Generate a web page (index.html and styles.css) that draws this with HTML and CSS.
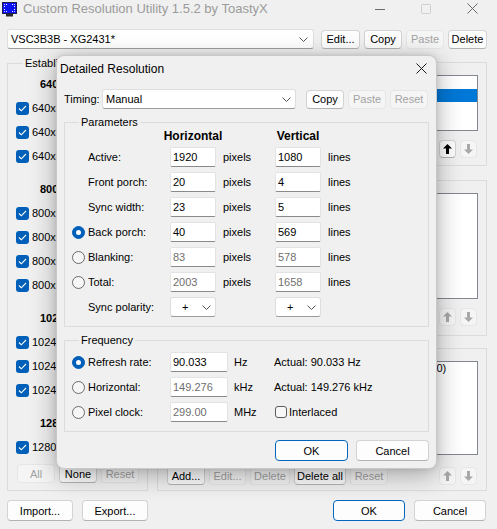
FILE: index.html
```html
<!DOCTYPE html>
<html>
<head>
<meta charset="utf-8">
<title>Custom Resolution Utility</title>
<link rel="stylesheet" href="styles.css">
</head>
<body>
<div class="app">
  <header class="titlebar">
    <svg class="appicon" width="15" height="15" viewBox="0 0 15 15">
      <rect x="0.5" y="0.5" width="14" height="11" fill="#0b12f2" stroke="#1b1b55"/>
      <path d="M2.5 5V2.5H5M10 2.5H12.5V5M12.5 7V9.5H10M5 9.5H2.5V7" stroke="#fff" fill="none" stroke-dasharray="1 1"/>
      <rect x="4" y="12" width="7" height="2.5" fill="#2a2a2a"/>
    </svg>
    <span class="apptitle">Custom Resolution Utility 1.5.2 by ToastyX</span>
    <div class="caption">
      <div class="capbtn"><svg width="10" height="10" viewBox="0 0 10 10"><path d="M0 5.5H10" stroke="#6b6b6b"/></svg></div>
      <div class="capbtn"><svg width="10" height="10" viewBox="0 0 10 10"><rect x="0.5" y="0.5" width="9" height="9" rx="1" fill="none" stroke="#cfcfcf"/></svg></div>
      <div class="capbtn"><svg width="11" height="11" viewBox="0 0 11 11"><path d="M0.5 0.5L10.5 10.5M10.5 0.5L0.5 10.5" stroke="#6b6b6b"/></svg></div>
    </div>
  </header>

  <div class="toprow">
    <div class="combo main-combo"><span>VSC3B3B - XG2431*</span><svg class="chev" width="9" height="5" viewBox="0 0 9 5"><path d="M0.5 0.5L4.5 4.5L8.5 0.5" fill="none" stroke="#555"/></svg></div>
    <button class="btn w39">Edit...</button>
    <button class="btn w38">Copy</button>
    <button class="btn w38 dis">Paste</button>
    <button class="btn w39">Delete</button>
  </div>

  <div class="mainbody">
    <fieldset class="group est">
      <legend>Established resolutions</legend>
      <div class="sec">
        <div class="sec-h">640x480</div>
        <div class="item"><span class="cb on"><svg width="9" height="7" viewBox="0 0 9 7"><path d="M1 3.5L3.3 5.8L8 1" fill="none" stroke="#fff" stroke-width="1.1"/></svg></span>640x480 @ 60 Hz</div>
        <div class="item"><span class="cb on"><svg width="9" height="7" viewBox="0 0 9 7"><path d="M1 3.5L3.3 5.8L8 1" fill="none" stroke="#fff" stroke-width="1.1"/></svg></span>640x480 @ 72 Hz</div>
        <div class="item"><span class="cb on"><svg width="9" height="7" viewBox="0 0 9 7"><path d="M1 3.5L3.3 5.8L8 1" fill="none" stroke="#fff" stroke-width="1.1"/></svg></span>640x480 @ 75 Hz</div>
      </div>
      <div class="sec">
        <div class="sec-h">800x600</div>
        <div class="item"><span class="cb on"><svg width="9" height="7" viewBox="0 0 9 7"><path d="M1 3.5L3.3 5.8L8 1" fill="none" stroke="#fff" stroke-width="1.1"/></svg></span>800x600 @ 56 Hz</div>
        <div class="item"><span class="cb on"><svg width="9" height="7" viewBox="0 0 9 7"><path d="M1 3.5L3.3 5.8L8 1" fill="none" stroke="#fff" stroke-width="1.1"/></svg></span>800x600 @ 60 Hz</div>
        <div class="item"><span class="cb on"><svg width="9" height="7" viewBox="0 0 9 7"><path d="M1 3.5L3.3 5.8L8 1" fill="none" stroke="#fff" stroke-width="1.1"/></svg></span>800x600 @ 72 Hz</div>
        <div class="item"><span class="cb on"><svg width="9" height="7" viewBox="0 0 9 7"><path d="M1 3.5L3.3 5.8L8 1" fill="none" stroke="#fff" stroke-width="1.1"/></svg></span>800x600 @ 75 Hz</div>
      </div>
      <div class="sec">
        <div class="sec-h">1024x768</div>
        <div class="item"><span class="cb on"><svg width="9" height="7" viewBox="0 0 9 7"><path d="M1 3.5L3.3 5.8L8 1" fill="none" stroke="#fff" stroke-width="1.1"/></svg></span>1024x768 @ 60 Hz</div>
        <div class="item"><span class="cb on"><svg width="9" height="7" viewBox="0 0 9 7"><path d="M1 3.5L3.3 5.8L8 1" fill="none" stroke="#fff" stroke-width="1.1"/></svg></span>1024x768 @ 70 Hz</div>
        <div class="item"><span class="cb on"><svg width="9" height="7" viewBox="0 0 9 7"><path d="M1 3.5L3.3 5.8L8 1" fill="none" stroke="#fff" stroke-width="1.1"/></svg></span>1024x768 @ 75 Hz</div>
      </div>
      <div class="sec last">
        <div class="sec-h">1280x1024</div>
        <div class="item"><span class="cb on"><svg width="9" height="7" viewBox="0 0 9 7"><path d="M1 3.5L3.3 5.8L8 1" fill="none" stroke="#fff" stroke-width="1.1"/></svg></span>1280x1024 @ 75 Hz</div>
      </div>
      <div class="btnrow est-btns">
        <button class="btn w38 dis">All</button>
        <button class="btn w38">None</button>
        <button class="btn w38 dis">Reset</button>
      </div>
    </fieldset>

    <div class="rightcol">
      <div class="rgroup g1">
        <div class="list l1">
          <div class="li"></div>
          <div class="li sel"></div>
        </div>
        <div class="btnrow">
          <div class="arrows">
            <button class="btn arr"><svg width="9" height="10" viewBox="0 0 9 10"><path d="M4.5 0L9 4.5H6V10H3V4.5H0Z" fill="#000"/></svg></button>
            <button class="btn arr dis"><svg width="9" height="10" viewBox="0 0 9 10"><path d="M4.5 10L9 5.5H6V0H3V5.5H0Z" fill="#a8a8a8"/></svg></button>
          </div>
        </div>
      </div>

      <div class="rgroup g2">
        <div class="list l2"></div>
        <div class="btnrow">
          <div class="arrows">
            <button class="btn arr dis"><svg width="9" height="10" viewBox="0 0 9 10"><path d="M4.5 0L9 4.5H6V10H3V4.5H0Z" fill="#a8a8a8"/></svg></button>
            <button class="btn arr dis"><svg width="9" height="10" viewBox="0 0 9 10"><path d="M4.5 10L9 5.5H6V0H3V5.5H0Z" fill="#a8a8a8"/></svg></button>
          </div>
        </div>
      </div>

      <div class="rgroup g3">
        <div class="list l3">
          <div class="li">CTA-861: 4 data blocks, 2 detailed resolutions (space: 0)</div>
        </div>
        <div class="btnrow">
          <button class="btn w38">Add...</button>
          <button class="btn w37 dis">Edit...</button>
          <button class="btn w40 dis">Delete</button>
          <button class="btn w52">Delete all</button>
          <button class="btn w38 dis">Reset</button>
          <div class="arrows">
            <button class="btn arr dis"><svg width="9" height="10" viewBox="0 0 9 10"><path d="M4.5 0L9 4.5H6V10H3V4.5H0Z" fill="#a8a8a8"/></svg></button>
            <button class="btn arr dis"><svg width="9" height="10" viewBox="0 0 9 10"><path d="M4.5 10L9 5.5H6V0H3V5.5H0Z" fill="#a8a8a8"/></svg></button>
          </div>
        </div>
      </div>
    </div>
  </div>

  <div class="bottomrow">
    <button class="btn big w66">Import...</button>
    <button class="btn big w66">Export...</button>
    <button class="btn big w72 def push">OK</button>
    <button class="btn big w72">Cancel</button>
  </div>

  <div class="dialog">
    <div class="dlg-title">
      <span>Detailed Resolution</span>
      <svg class="dlg-close" width="11" height="11" viewBox="0 0 11 11"><path d="M0.5 0.5L10.5 10.5M10.5 0.5L0.5 10.5" stroke="#1a1a1a"/></svg>
    </div>
    <div class="timing">
      <span class="timing-lbl">Timing:</span>
      <div class="combo timing-combo"><span>Manual</span><svg class="chev" width="9" height="5" viewBox="0 0 9 5"><path d="M0.5 0.5L4.5 4.5L8.5 0.5" fill="none" stroke="#555"/></svg></div>
      <button class="btn w38">Copy</button>
      <button class="btn w38 dis">Paste</button>
      <button class="btn w38 dis">Reset</button>
    </div>

    <fieldset class="group params">
      <legend>Parameters</legend>
      <div class="pgrid">
        <div></div><div></div><div class="hdr"><span>Horizontal</span></div><div></div><div class="hdr"><span>Vertical</span></div><div></div>

        <div></div><div class="lbl">Active:</div><div class="tb">1920</div><div class="unit">pixels</div><div class="tb">1080</div><div class="unit">lines</div>
        <div></div><div class="lbl">Front porch:</div><div class="tb">20</div><div class="unit">pixels</div><div class="tb">4</div><div class="unit">lines</div>
        <div></div><div class="lbl">Sync width:</div><div class="tb">23</div><div class="unit">pixels</div><div class="tb">5</div><div class="unit">lines</div>
        <span class="rb on"></span><div class="lbl">Back porch:</div><div class="tb">40</div><div class="unit">pixels</div><div class="tb">569</div><div class="unit">lines</div>
        <span class="rb"></span><div class="lbl">Blanking:</div><div class="tb dis">83</div><div class="unit">pixels</div><div class="tb dis">578</div><div class="unit">lines</div>
        <span class="rb"></span><div class="lbl">Total:</div><div class="tb dis">2003</div><div class="unit">pixels</div><div class="tb dis">1658</div><div class="unit">lines</div>
        <div></div><div class="lbl">Sync polarity:</div>
        <div class="combo pol"><span>+</span><svg class="chev" width="9" height="5" viewBox="0 0 9 5"><path d="M0.5 0.5L4.5 4.5L8.5 0.5" fill="none" stroke="#555"/></svg></div>
        <div></div>
        <div class="combo pol"><span>+</span><svg class="chev" width="9" height="5" viewBox="0 0 9 5"><path d="M0.5 0.5L4.5 4.5L8.5 0.5" fill="none" stroke="#555"/></svg></div>
        <div></div>
      </div>
    </fieldset>

    <fieldset class="group freq">
      <legend>Frequency</legend>
      <div class="fgrid">
        <span class="rb on"></span><div class="lbl">Refresh rate:</div><div class="tb">90.033</div><div class="unit">Hz</div><div class="actual">Actual: 90.033 Hz</div>
        <span class="rb"></span><div class="lbl">Horizontal:</div><div class="tb dis">149.276</div><div class="unit">kHz</div><div class="actual">Actual: 149.276 kHz</div>
        <span class="rb"></span><div class="lbl">Pixel clock:</div><div class="tb dis">299.00</div><div class="unit">MHz</div><div class="actual inter"><span class="cb off"></span>Interlaced</div>
      </div>
    </fieldset>

    <div class="dlg-btns">
      <button class="btn big w73 def">OK</button>
      <button class="btn big w73">Cancel</button>
    </div>
  </div>
</div>
</body>
</html>
```

FILE: styles.css
```css
* { box-sizing: border-box; }
html, body { margin: 0; padding: 0; }
body {
  background: #f0f0f0;
  font-family: "Liberation Sans", Arial, sans-serif;
  font-size: 11px;
  color: #000;
}
.app {
  position: relative;
  width: 497px;
  height: 529px;
  overflow: hidden;
  background: #f0f0f0;
}

/* title bar */
.titlebar { display: flex; align-items: flex-start; height: 29px; }
.appicon { margin: 2px 0 0 2px; }
.apptitle { margin-left: 6px; font-size: 13px; line-height: 18px; color: #9b9b9b; white-space: nowrap; }
.caption { margin-left: auto; margin-right: 2px; display: flex; }
.capbtn { width: 46px; height: 17px; display: flex; align-items: center; justify-content: center; }

/* generic controls */
.btn {
  height: 19px;
  padding: 0;
  font: inherit;
  color: #000;
  background: #fdfdfd;
  border: 1px solid #d3d3d3;
  border-bottom-color: #b3b3b3;
  border-radius: 4px;
  display: flex;
  align-items: center;
  justify-content: center;
  flex: none;
}
.btn.dis { background: #f5f5f5; border-color: #e6e6e6; color: #a3a3a3; }
.btn.big { height: 21px; }
.btn.def { border-color: #0067c0; }
.w37 { width: 37px; } .w38 { width: 38px; } .w39 { width: 39px; } .w40 { width: 40px; }
.w52 { width: 52px; } .w66 { width: 66px; } .w72 { width: 72px; } .w73 { width: 73px; }

.combo {
  height: 20px;
  background: #fff;
  border: 1px solid #dedede;
  border-bottom-color: #9c9c9c;
  border-radius: 3px;
  display: flex;
  align-items: center;
  justify-content: space-between;
  padding: 0 5px 0 3px;
}
.chev { flex: none; }

.cb {
  width: 13px; height: 13px;
  border-radius: 3px;
  display: inline-flex; align-items: center; justify-content: center;
  flex: none;
}
.cb.on { background: #005fb8; }
.cb.off { width: 12px; height: 12px; background: #f7f7f7; border: 1px solid #5c5c5c; }

.rb {
  width: 13px; height: 13px; border-radius: 50%;
  background: #f6f6f6; border: 1px solid #6a6a6a;
  align-self: center;
}
.rb.on { background: #005fb8; border-color: #005fb8; position: relative; }
.rb.on::after {
  content: ""; position: absolute; left: 3px; top: 3px;
  width: 5px; height: 5px; border-radius: 50%; background: #fff;
}

/* top row */
.toprow { display: flex; align-items: center; gap: 4px; height: 20px; margin: 0 10px 0 7px; }
.main-combo { width: 307px; margin-right: 3px; }

/* groups */
.group { margin: 0; min-width: 0; border: 1px solid #dcdcdc; }
.group > legend { margin-left: 7px; padding: 0 2px; line-height: 14px; white-space: nowrap; }

.mainbody { display: flex; gap: 9px; margin: 7px 10px 0 7px; height: 435px; }
.est { width: 141px; height: 435px; padding: 2px 8px 0 8px; }
.sec { margin-bottom: 9px; }
.sec.last { margin-bottom: 0; }
.sec-h { height: 24px; line-height: 24px; font-weight: bold; padding-left: 24px; white-space: nowrap; }
.item { height: 24px; display: flex; align-items: center; gap: 3px; white-space: nowrap; }
.btnrow { display: flex; gap: 4px; align-items: center; }
.est-btns { margin-top: 5px; margin-left: 1px; }

.rightcol { width: 330px; display: flex; flex-direction: column; padding-top: 6px; }
.rgroup { border: 1px solid #dcdcdc; padding: 12px 8px 0 9px; }
.g1 { height: 104px; }
.g2 { height: 156px; margin-top: 14px; }
.g3 { height: 143px; margin-top: 12px; }
.list { background: #fff; border: 1px solid #828790; overflow: hidden; }
.l1 { height: 56px; }
.l2 { height: 106px; }
.l3 { height: 94px; }
.li { height: 13px; line-height: 13px; padding-left: 2px; white-space: nowrap; }
.li.sel { background: #0078d7; color: #fff; }
.g1 .btnrow, .g2 .btnrow { margin-top: 9px; }
.g3 .btnrow { margin-top: 11px; }
.arrows { margin-left: auto; display: flex; gap: 4px; margin-right: 1px; }
.btn.arr { width: 17px; height: 18px; }

.bottomrow { display: flex; gap: 9px; margin: 9px 11px 0 7px; }
.push { margin-left: auto; }

/* dialog */
.dialog {
  position: absolute;
  left: 56px; top: 55px;
  width: 381px; height: 414px;
  background: #f0f0f0;
  border: 1px solid #c9c9c9;
  border-radius: 8px;
  box-shadow: 0 6px 26px rgba(0,0,0,0.32), 0 0 6px rgba(0,0,0,0.1);
  padding: 0 7px;
}
.dlg-title { height: 25px; display: flex; align-items: center; font-size: 12px; margin-left: -4px; }
.dlg-close { margin-left: auto; margin-right: 2px; }
.timing { display: flex; align-items: center; margin-top: 8px; height: 20px; }
.timing-lbl { width: 38px; }
.timing-combo { width: 194px; margin-right: 10px; padding-right: 4px; }
.timing .btn + .btn { margin-left: 4px; }

.params { margin-top: 6px; padding: 0 8px 9px 7px; }
.freq { margin-top: 6px; padding: 5px 8px 9px 7px; }
.pgrid {
  display: grid;
  grid-template-columns: 16px 82px 46px 59px 46px auto;
  grid-template-rows: 13px;
  grid-auto-rows: 20px;
  row-gap: 5px;
  align-items: center;
}
.fgrid {
  display: grid;
  grid-template-columns: 16px 82px 58px 46px auto;
  grid-auto-rows: 20px;
  row-gap: 5px;
  align-items: center;
}
.hdr { display: flex; justify-content: center; font-weight: bold; font-size: 12px; white-space: nowrap; }
.tb {
  height: 20px;
  background: #fff;
  border: 1px solid #e3e3e3;
  border-bottom-color: #8a8a8a;
  border-radius: 2px;
  padding-left: 2px;
  line-height: 18px;
}
.tb.dis { color: #6f6f6f; }
.unit { padding-left: 7px; }
.fgrid .unit { padding-left: 6px; }
.pol { padding: 0 4px 0 11px; }
.inter { display: flex; align-items: center; gap: 2px; padding-left: 1px; }

.dlg-btns { display: flex; justify-content: flex-end; gap: 8px; margin-top: 8px; }
```
